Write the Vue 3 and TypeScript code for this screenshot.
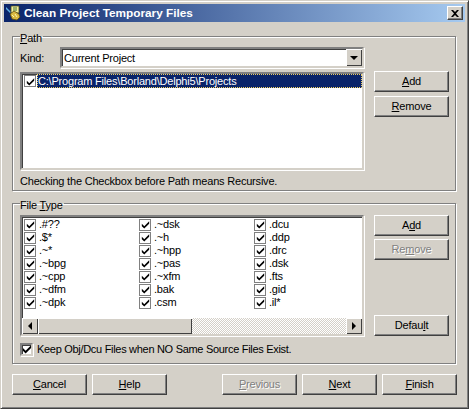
<script setup lang="ts">
const kinds = [
  ['.#??', '.$*', '.~*', '.~bpg', '.~cpp', '.~dfm', '.~dpk'],
  ['.~dsk', '.~h', '.~hpp', '.~pas', '.~xfm', '.bak', '.csm'],
  ['.dcu', '.ddp', '.drc', '.dsk', '.fts', '.gid', '.il*']
];
</script>

<template>
  <div class="window">
    <div class="titlebar">
      <svg class="app-icon" width="16" height="16" viewBox="0 0 16 16">
        <path d="M0 2l5 5-1 1-4-4z" fill="#5fb0e8" />
        <path d="M5 1h8v7H5z" fill="#f4ee9a" stroke="#4a4a20" stroke-width=".8" />
        <path d="M7 3h4M7 5h4" stroke="#3c6e3c" />
        <path d="M4 9l4-3 5 3 1 3-3 3-5-1z" fill="#d8b840" stroke="#5a4a10" stroke-width=".8" />
        <path d="M6 10l2 2M9 9l2 3" stroke="#fff6b0" />
      </svg>
      <span class="title">Clean Project Temporary Files</span>
      <button class="close">
        <svg width="8" height="7" viewBox="0 0 8 7"><path d="M0 0h2l2 2 2-2h2L5 3.500 8 7H6L4 5 2 7H0l3-3.500z" fill="#000" /></svg>
      </button>
    </div>

    <div class="body">
      <fieldset class="group path-group">
        <legend><u>P</u>ath</legend>
        <div class="group-main">
          <div class="kind-row">
            <label>Kind:</label>
            <div class="combo">
              <span>Current Project</span>
              <div class="combo-btn"><i class="arrow-down"></i></div>
            </div>
          </div>
          <div class="list path-list">
            <div class="path-row">
              <span class="check"><svg width="9" height="9" viewBox="0 0 11 11"><path d="M1 4.500l3 3 6-6v3l-6 6-3-3z" fill="#000" /></svg></span>
              <span class="selected">C:\Program Files\Borland\Delphi5\Projects</span>
            </div>
          </div>
          <p class="note">Checking the Checkbox before Path means Recursive.</p>
        </div>
        <div class="side">
          <button class="btn"><span><u>A</u>dd</span></button>
          <button class="btn"><span><u>R</u>emove</span></button>
        </div>
      </fieldset>

      <fieldset class="group type-group">
        <legend>File <u>T</u>ype</legend>
        <div class="group-main">
          <div class="list type-list">
            <div class="columns">
              <div v-for="(col, i) in kinds" :key="i" class="column">
                <div v-for="k in col" :key="k" class="type-row">
                  <span class="check"><svg width="9" height="9" viewBox="0 0 11 11"><path d="M1 4.500l3 3 6-6v3l-6 6-3-3z" fill="#000" /></svg></span>
                  <span>{{ k }}</span>
                </div>
              </div>
            </div>
            <div class="hscroll">
              <div class="sbtn"><i class="arrow-left"></i></div>
              <div class="thumb"></div>
              <div class="track"></div>
              <div class="sbtn"><i class="arrow-right"></i></div>
            </div>
          </div>
          <div class="keep-row">
            <span class="check sunken"><svg width="10" height="10" viewBox="0 0 11 11"><path d="M1 4.500l3 3 6-6v3l-6 6-3-3z" fill="#000" /></svg></span>
            <span class="keep-text">Keep Obj/Dcu Files when NO Same Source Files Exist.</span>
          </div>
        </div>
        <div class="side type-side">
          <button class="btn"><span>A<u>d</u>d</span></button>
          <button class="btn disabled"><span>Re<u>m</u>ove</span></button>
          <button class="btn default-btn"><span>Defau<u>l</u>t</span></button>
        </div>
      </fieldset>

      <div class="footer">
        <button class="btn"><span><u>C</u>ancel</span></button>
        <button class="btn"><span><u>H</u>elp</span></button>
        <div class="spacer"></div>
        <button class="btn disabled"><span><u>P</u>revious</span></button>
        <button class="btn"><span><u>N</u>ext</span></button>
        <button class="btn"><span><u>F</u>inish</span></button>
      </div>
    </div>
  </div>
</template>

<style>
html, body {
  margin: 0;
  background: #d4d0c8;
}
</style>

<style scoped>
.window {
  width: 469px;
  height: 409px;
  box-sizing: border-box;
  padding: 4px;
  background: #d4d0c8;
  border: 1px solid;
  border-color: #d4d0c8 #404040 #404040 #d4d0c8;
  box-shadow: inset 1px 1px 0 #fff, inset -1px -1px 0 #808080;
  font-family: "Liberation Sans", Arial, sans-serif;
  font-size: 11px;
  letter-spacing: -0.2px;
  color: #000;
  overflow: hidden;
}

.titlebar {
  height: 18px;
  margin: -1px -1px 0 -1px;
  display: flex;
  align-items: center;
  padding: 0 2px;
  background: linear-gradient(90deg, #0a246a, #a6caf0);
}

.app-icon {
  flex: none;
  margin-right: 2px;
}

.title {
  flex: 1;
  color: #fff;
  font-weight: bold;
  font-size: 11.800px;
  letter-spacing: 0;
}

.close {
  width: 16px;
  height: 14px;
  padding: 0;
  display: flex;
  align-items: center;
  justify-content: center;
  background: #d4d0c8;
  border: 1px solid;
  border-color: #fff #404040 #404040 #fff;
  box-shadow: inset -1px -1px 0 #808080;
}

.body {
  padding: 6px 7px 0 7px;
}

.group {
  margin: 0;
  min-width: 0;
  width: 444px;
  box-sizing: border-box;
  border: 1px solid #808080;
  box-shadow: 1px 1px 0 #fff, inset 1px 1px 0 #fff;
  display: flex;
  gap: 10px;
  padding: 0 7px;
}

.group legend {
  padding: 4px 1px 0 0;
  margin-left: 0;
  line-height: 13px;
}

.path-group {
  height: 163px;
}

.type-group {
  height: 169px;
  margin-top: 4px;
}

.group-main {
  width: 344px;
  flex: none;
}

.side {
  display: flex;
  flex-direction: column;
  gap: 4px;
  padding-top: 26px;
}

.type-side {
  padding-top: 3px;
  gap: 3px;
}

.default-btn {
  margin-top: 52px;
}

.kind-row {
  display: flex;
  align-items: center;
  height: 21px;
  margin-top: 2px;
}

.kind-row label {
  width: 40px;
  flex: none;
}

.combo {
  width: 304px;
  height: 21px;
  box-sizing: border-box;
  display: flex;
  align-items: center;
  background: #fff;
  border: 2px solid;
  border-color: #808080 #d4d0c8 #d4d0c8 #808080;
  box-shadow: inset 1px 1px 0 #404040, 1px 1px 0 #fff;
  padding-left: 2px;
}

.combo span {
  flex: 1;
}

.combo-btn {
  width: 16px;
  height: 17px;
  display: flex;
  align-items: center;
  justify-content: center;
  background: #d4d0c8;
  box-shadow: inset 1px 1px 0 #fff, inset -1px -1px 0 #404040;
}

.arrow-down {
  border: 4px solid transparent;
  border-top-color: #000;
  border-bottom: 0;
}

.arrow-left {
  border: 4px solid transparent;
  border-right-color: #000;
  border-left: 0;
}

.arrow-right {
  border: 4px solid transparent;
  border-left-color: #000;
  border-right: 0;
}

.list {
  box-sizing: border-box;
  background: #fff;
  border: 2px solid;
  border-color: #808080 #d4d0c8 #d4d0c8 #808080;
  box-shadow: inset 1px 1px 0 #404040, 1px 1px 0 #fff;
}

.path-list {
  height: 98px;
  margin-top: 4px;
  padding: 0 0 0 2px;
}

.path-row {
  display: flex;
  align-items: center;
  height: 14px;
}

.check {
  width: 12px;
  height: 12px;
  box-sizing: border-box;
  flex: none;
  display: flex;
  align-items: center;
  justify-content: center;
  border: 1px solid #808080;
  background: #fff;
  margin-right: 3px;
}

.path-row .check {
  margin-right: 1px;
}

.check.sunken {
  width: 13px;
  height: 13px;
  margin-right: 0;
  border: 2px solid;
  border-color: #808080 #d4d0c8 #d4d0c8 #808080;
  box-shadow: inset 1px 1px 0 #404040, 1px 1px 0 #fff;
}

.check.sunken svg {
  margin: -1px;
}

.selected {
  flex: 1;
  height: 14px;
  line-height: 14px;
  box-sizing: border-box;
  padding-left: 1px;
  background: #0a246a;
  color: #fff;
  outline: 1px dotted #f0d060;
  outline-offset: -1px;
}

.note {
  margin: 5px 0 0 0;
  line-height: 13px;
}

.type-list {
  height: 121px;
  margin-top: 3px;
  display: flex;
  flex-direction: column;
}

.columns {
  flex: 1;
  display: grid;
  grid-template-columns: repeat(3, 115px);
  padding: 1px 0 0 2px;
}

.type-row {
  height: 13px;
  display: flex;
  align-items: center;
  line-height: 13px;
}

.hscroll {
  height: 16px;
  display: flex;
  background-color: #fff;
  background-image: conic-gradient(#d4d0c8 25%, #fff 0 50%, #d4d0c8 0 75%, #fff 0);
  background-size: 2px 2px;
}

.sbtn {
  width: 16px;
  display: flex;
  align-items: center;
  justify-content: center;
  background: #d4d0c8;
  box-shadow: inset 1px 1px 0 #fff, inset -1px -1px 0 #404040;
}

.thumb {
  width: 154px;
  background: #d4d0c8;
  box-shadow: inset 1px 1px 0 #fff, inset -1px -1px 0 #404040;
}

.track {
  flex: 1;
}

.keep-row {
  display: flex;
  align-items: center;
  gap: 4px;
  margin-top: 6px;
  height: 14px;
}

.keep-text {
  letter-spacing: -0.3px;
}

.btn {
  width: 75px;
  height: 21px;
  padding: 0 0 2px 0;
  flex: none;
  box-sizing: border-box;
  background: #d4d0c8;
  border: 1px solid;
  border-color: #fff #404040 #404040 #fff;
  box-shadow: inset -1px -1px 0 #808080;
  font: inherit;
  letter-spacing: inherit;
  color: #000;
}

.btn.disabled {
  color: #808080;
  text-shadow: 1px 1px 0 #fff;
}

.footer {
  display: flex;
  gap: 5px;
  margin-top: 10px;
  width: 445px;
}

.spacer {
  width: 45px;
  flex: none;
}
</style>
